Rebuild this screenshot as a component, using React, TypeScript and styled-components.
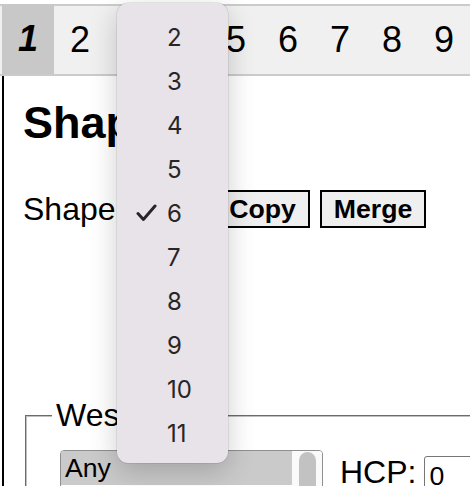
import styled, { createGlobalStyle } from "styled-components";

const GlobalStyle = createGlobalStyle`
  html, body {
    margin: 0;
    padding: 0;
    background: #fff;
  }
  body {
    width: 470px;
    height: 486px;
    overflow: hidden;
    font-family: "Liberation Sans", Arial, sans-serif;
    color: #000;
  }
`;

const Page = styled.div`
  position: relative;
  width: 470px;
  height: 486px;
  overflow: hidden;
  padding-top: 4px;
  box-sizing: border-box;
`;

const TabBar = styled.nav`
  display: flex;
  width: 720px;
  height: 72px;
  box-sizing: border-box;
  padding-left: 2px;
  background: #f0f0f0;
  border-top: 2px solid #cbcbcb;
  border-bottom: 2px solid #cbcbcb;
`;

type TabProps = {
  $active?: boolean;
};

const Tab = styled.div<TabProps>`
  flex: none;
  width: 52px;
  margin-top: ${({ $active }) => ($active ? "-2px" : "0")};
  display: flex;
  align-items: center;
  justify-content: center;
  font-size: 36px;
  font-weight: ${({ $active }) => ($active ? 700 : 400)};
  font-style: ${({ $active }) => ($active ? "italic" : "normal")};
  background: ${({ $active }) => ($active ? "#c8c8c8" : "transparent")};
`;

const Panel = styled.main`
  margin-left: 2px;
  border-left: 2px solid #000;
  padding: 21px 0 0 19px;
  height: 420px;
`;

const Heading = styled.h2`
  margin: 0;
  font-size: 45px;
  line-height: 52px;
  font-weight: 700;
`;

const ShapeRow = styled.div`
  display: flex;
  align-items: center;
  gap: 8px;
  margin-top: 41px;
  height: 38px;
  font-size: 32px;
  line-height: 38px;
`;

const ShapeSelect = styled.div`
  width: 73px;
  height: 34px;
  box-sizing: border-box;
  border: 1px solid #8f8f8f;
  border-radius: 5px;
  font-size: 26px;
  line-height: 32px;
  padding-left: 8px;
`;

const Button = styled.button`
  height: 38px;
  box-sizing: border-box;
  padding: 0 12px;
  border: 2px solid #000;
  border-radius: 0;
  background: #efefef;
  color: #000;
  font: 700 26.67px "Liberation Sans", Arial, sans-serif;
  cursor: pointer;

  & + & {
    margin-left: 2px;
  }
`;

const Fieldset = styled.fieldset`
  margin: 169px 0 0 2px;
  width: 600px;
  min-width: 0;
  padding: 16px 0 0 25px;
  border: 2px groove #c0c0c0;
  font-size: 32px;
`;

const Legend = styled.legend`
  padding: 0 4px;
  font-size: 32px;
  line-height: 37px;
`;

const HandRow = styled.div`
  display: flex;
  align-items: flex-start;
  margin-left: 8px;
`;

const ListBox = styled.div`
  display: flex;
  width: 263px;
  height: 120px;
  box-sizing: border-box;
  border: 1px solid #8f8f8f;
  border-radius: 4px;
  overflow: hidden;
  background: #fff;
`;

const Options = styled.div`
  flex: 1;
`;

type OptionProps = {
  $selected?: boolean;
};

const Option = styled.div<OptionProps>`
  height: 34px;
  padding-left: 4px;
  font-size: 26.67px;
  line-height: 34px;
  background: ${({ $selected }) => ($selected ? "#cacaca" : "transparent")};
`;

const ScrollTrack = styled.div`
  width: 30px;
  box-sizing: border-box;
  padding: 1px 6px 0 7px;
  background: #fafafa;
`;

const Thumb = styled.div`
  width: 17px;
  height: 70px;
  border-radius: 9px;
  background: #c2c2c2;
`;

const FieldLabel = styled.label`
  display: flex;
  align-items: flex-start;
  gap: 8px;
  margin: 4px 0 0 17px;
  font-size: 32px;
  line-height: 37px;
`;

const NumberInput = styled.input`
  width: 120px;
  height: 40px;
  margin-top: 2px;
  box-sizing: border-box;
  padding: 0 4px;
  border: 1px solid #767676;
  border-radius: 3px;
  font: 400 26.67px "Liberation Sans", Arial, sans-serif;
  color: #000;
`;

const Menu = styled.ul`
  position: absolute;
  left: 117px;
  top: 3px;
  width: 111px;
  height: 460px;
  box-sizing: border-box;
  margin: 0;
  padding: 12px 0 8px;
  list-style: none;
  background: #e8e3e8;
  border-radius: 11px;
  box-shadow: 0 0 0 0.5px rgba(0, 0, 0, 0.14), 0 8px 28px rgba(0, 0, 0, 0.2);
  font-family: Inter, "Liberation Sans", sans-serif;
  font-size: 24px;
  color: #262626;
`;

const MenuItem = styled.li`
  height: 44px;
  display: grid;
  grid-template-columns: 31px auto;
  align-items: center;
  padding-left: 19px;
`;

const CheckSlot = styled.span`
  display: flex;
  align-items: center;
`;

const Check = () => (
  <svg width="21" height="18" viewBox="0 0 21 18">
    <path
      d="M2 9.6 L7.4 15.4 L19 2"
      fill="none"
      stroke="#262626"
      strokeWidth="3"
      strokeLinecap="round"
      strokeLinejoin="round"
    />
  </svg>
);

const tabs = [1, 2, 3, 4, 5, 6, 7, 8, 9];
const sizes = [2, 3, 4, 5, 6, 7, 8, 9, 10, 11];

function App(): JSX.Element {
  return (
    <Page>
      <GlobalStyle />
      <TabBar>
        {tabs.map((t) => (
          <Tab key={t} $active={t === 1}>
            {t}
          </Tab>
        ))}
      </TabBar>
      <Panel>
        <Heading>Shapes</Heading>
        <ShapeRow>
          <span>Shaper</span>
          <ShapeSelect>6</ShapeSelect>
          <Button>Copy</Button>
          <Button>Merge</Button>
        </ShapeRow>
        <Fieldset>
          <Legend>West</Legend>
          <HandRow>
            <ListBox>
              <Options>
                <Option $selected>Any</Option>
              </Options>
              <ScrollTrack>
                <Thumb />
              </ScrollTrack>
            </ListBox>
            <FieldLabel>
              HCP:
              <NumberInput defaultValue="0" />
            </FieldLabel>
          </HandRow>
        </Fieldset>
      </Panel>
      <Menu>
        {sizes.map((s) => (
          <MenuItem key={s}>
            <CheckSlot>{s === 6 ? <Check /> : null}</CheckSlot>
            <span>{s}</span>
          </MenuItem>
        ))}
      </Menu>
    </Page>
  );
}

export default App;
